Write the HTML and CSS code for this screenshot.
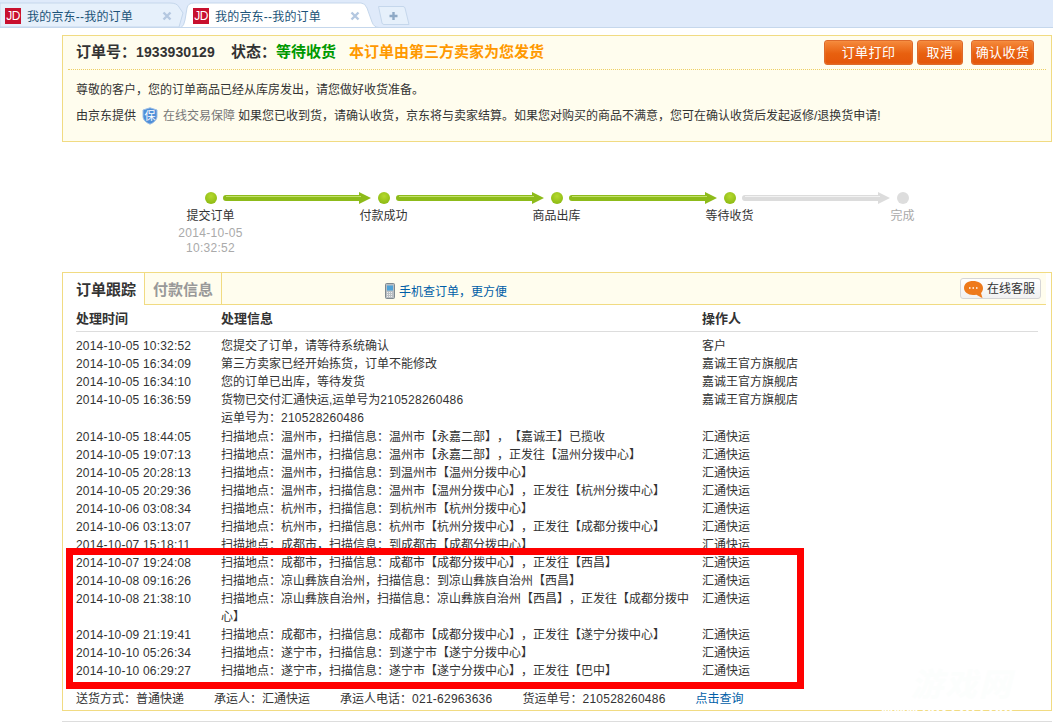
FILE: index.html
```html
<!DOCTYPE html>
<html lang="zh-CN">
<head>
<meta charset="utf-8">
<title>我的京东--我的订单</title>
<link rel="stylesheet" href="styles.css">
</head>
<body>
<div class="tabstrip">
  <div class="tab tab-first">
    <svg class="tab-shape" width="186" height="28" viewBox="0 0 186 28"><path d="M0 3H170Q177 3 179 7L183 13L179 27H0Z" fill="#e6f0fb" stroke="#c5d7ec"/></svg>
    <span class="jd">JD</span><span class="tab-title">我的京东--我的订单</span>
    <svg class="tab-close" width="10" height="10" viewBox="0 0 10 10"><path d="M1.5 1.5L8.5 8.5M8.5 1.5L1.5 8.5" stroke="#b4c8e0" stroke-width="2.4"/></svg>
  </div>
  <div class="tab tab-active">
    <svg class="tab-shape" width="198" height="28" viewBox="0 0 198 28"><path d="M0 27.5Q3 26 4 20L6 8Q7 3 13 3H180Q184 3 186 8L191 22Q193 27.5 198 27.5Z" fill="#fff" stroke="#c5d7ec"/></svg>
    <span class="jd">JD</span><span class="tab-title">我的京东--我的订单</span>
    <svg class="tab-close" width="10" height="10" viewBox="0 0 10 10"><path d="M1.5 1.5L8.5 8.5M8.5 1.5L1.5 8.5" stroke="#b4c8e0" stroke-width="2.4"/></svg>
  </div>
  <svg class="tab-new" width="34" height="22" viewBox="0 0 34 22"><path d="M1.5 1.5H26Q27.5 1.5 28 3L32 19.5H7Q5.5 19.5 5 18Z" fill="#e6f0fb" stroke="#c5d7ec"/><path d="M16.5 7V15M12.5 11H20.5" stroke="#8ea9c6" stroke-width="2.4"/></svg>
</div>

<main class="page">
  <section class="summary">
    <div class="summary-head">
      <h1 class="order-title">订单号：<span class="order-no">1933930129</span><span class="state-label">状态：</span><span class="state">等待收货</span><span class="seller">本订单由第三方卖家为您发货</span></h1>
      <div class="actions">
        <a class="btn btn-print">订单打印</a>
        <a class="btn btn-cancel">取消</a>
        <a class="btn btn-confirm">确认收货</a>
      </div>
    </div>
    <div class="summary-body">
      <p>尊敬的客户，您的订单商品已经从库房发出，请您做好收货准备。</p>
      <p class="guarantee">由京东提供
        <svg class="shield" width="16" height="18" viewBox="0 0 16 18"><path d="M8 .8L15 3V9.5C15 13 11.5 15.8 8 17.2 4.500 15.800 1 13 1 9.5V3Z" fill="#4f8fd8" stroke="#9dbfe6"/><text x="8" y="13" text-anchor="middle" class="shield-text">保</text></svg>
        <span class="muted">在线交易保障</span> 如果您已收到货，请确认收货，京东将与卖家结算。如果您对购买的商品不满意，您可在确认收货后发起返修/退换货申请!</p>
    </div>
  </section>

  <section class="progress">
    <div class="track">
      <span class="dot"></span>
      <svg class="arrow" width="148" height="12" viewBox="0 0 148 12"><path d="M3 3H136V0L148 6 136 12V9H3Q0 9 0 6T3 3Z" fill="#8dbb1a"/><path d="M3 4.500H138" stroke="#c2e06a" stroke-width="1"/></svg>
      <span class="dot"></span>
      <svg class="arrow" width="148" height="12" viewBox="0 0 148 12"><path d="M3 3H136V0L148 6 136 12V9H3Q0 9 0 6T3 3Z" fill="#8dbb1a"/><path d="M3 4.500H138" stroke="#c2e06a" stroke-width="1"/></svg>
      <span class="dot"></span>
      <svg class="arrow" width="148" height="12" viewBox="0 0 148 12"><path d="M3 3H136V0L148 6 136 12V9H3Q0 9 0 6T3 3Z" fill="#8dbb1a"/><path d="M3 4.500H138" stroke="#c2e06a" stroke-width="1"/></svg>
      <span class="dot"></span>
      <svg class="arrow" width="148" height="12" viewBox="0 0 148 12"><path d="M3 3H136V0L148 6 136 12V9H3Q0 9 0 6T3 3Z" fill="#dcdcdc"/><path d="M3 4.500H138" stroke="#f2f2f2" stroke-width="1"/></svg>
      <span class="dot dot-off"></span>
    </div>
    <div class="steps">
      <div class="step">提交订单<div class="step-date">2014-10-05<br>10:32:52</div></div>
      <div class="step">付款成功</div>
      <div class="step">商品出库</div>
      <div class="step">等待收货</div>
      <div class="step step-off">完成</div>
    </div>
  </section>

  <section class="tracking">
    <div class="tracking-bar">
      <div class="t-tab t-tab-on">订单跟踪</div>
      <div class="t-tab t-tab-off">付款信息</div>
      <a class="mobile-link">
        <svg class="phone" width="10" height="16" viewBox="0 0 10 16"><rect x=".5" y=".5" width="9" height="15" rx="1" fill="#b9bfc4" stroke="#7f8a90"/><rect x="2" y="2.500" width="6" height="5" fill="#4fa3d8"/><path d="M2 9.500H8M2 11.500H8M2 13.500H8" stroke="#eee" stroke-dasharray="1 1"/></svg>
        手机查订单，更方便</a>
      <a class="service">
        <svg class="bubble" width="21" height="19" viewBox="0 0 21 19"><path d="M10 1C15 1 20 3.500 20 8C20 10.500 19 12 18 13L19.500 18C17 17 15 15.500 13.500 14.800C12 15 11 15 10 15C5 15 1 12 1 8C1 3.500 5 1 10 1Z" fill="#ee7a1c"/><path d="M6 8H7.500M9.500 8H11M13 8H14.500" stroke="#fff" stroke-width="1.600"/></svg>
        在线客服</a>
    </div>
    <div class="log">
      <div class="row row-head"><div>处理时间</div><div>处理信息</div><div>操作人</div></div>
      <div class="rows">
        <div class="row"><div>2014-10-05 10:32:52</div><div>您提交了订单，请等待系统确认</div><div>客户</div></div>
        <div class="row"><div>2014-10-05 16:34:09</div><div>第三方卖家已经开始拣货，订单不能修改</div><div>嘉诚王官方旗舰店</div></div>
        <div class="row"><div>2014-10-05 16:34:10</div><div>您的订单已出库，等待发货</div><div>嘉诚王官方旗舰店</div></div>
        <div class="row row-tall"><div>2014-10-05 16:36:59</div><div>货物已交付汇通快运,运单号为<span class="num">210528260486</span><br>运单号为：<span class="num">210528260486</span></div><div>嘉诚王官方旗舰店</div></div>
        <div class="row"><div>2014-10-05 18:44:05</div><div>扫描地点：温州市，扫描信息：温州市【永嘉二部】，【嘉诚王】已揽收</div><div>汇通快运</div></div>
        <div class="row"><div>2014-10-05 19:07:13</div><div>扫描地点：温州市，扫描信息：温州市【永嘉二部】，正发往【温州分拨中心】</div><div>汇通快运</div></div>
        <div class="row"><div>2014-10-05 20:28:13</div><div>扫描地点：温州市，扫描信息：到温州市【温州分拨中心】</div><div>汇通快运</div></div>
        <div class="row"><div>2014-10-05 20:29:36</div><div>扫描地点：温州市，扫描信息：温州市【温州分拨中心】，正发往【杭州分拨中心】</div><div>汇通快运</div></div>
        <div class="row"><div>2014-10-06 03:08:34</div><div>扫描地点：杭州市，扫描信息：到杭州市【杭州分拨中心】</div><div>汇通快运</div></div>
        <div class="row"><div>2014-10-06 03:13:07</div><div>扫描地点：杭州市，扫描信息：杭州市【杭州分拨中心】，正发往【成都分拨中心】</div><div>汇通快运</div></div>
        <div class="row"><div>2014-10-07 15:18:11</div><div>扫描地点：成都市，扫描信息：到成都市【成都分拨中心】</div><div>汇通快运</div></div>
        <div class="row"><div>2014-10-07 19:24:08</div><div>扫描地点：成都市，扫描信息：成都市【成都分拨中心】，正发往【西昌】</div><div>汇通快运</div></div>
        <div class="row"><div>2014-10-08 09:16:26</div><div>扫描地点：凉山彝族自治州，扫描信息：到凉山彝族自治州【西昌】</div><div>汇通快运</div></div>
        <div class="row"><div>2014-10-08 21:38:10</div><div>扫描地点：凉山彝族自治州，扫描信息：凉山彝族自治州【西昌】，正发往【成都分拨中心】</div><div>汇通快运</div></div>
        <div class="row"><div>2014-10-09 21:19:41</div><div>扫描地点：成都市，扫描信息：成都市【成都分拨中心】，正发往【遂宁分拨中心】</div><div>汇通快运</div></div>
        <div class="row"><div>2014-10-10 05:26:34</div><div>扫描地点：遂宁市，扫描信息：到遂宁市【遂宁分拨中心】</div><div>汇通快运</div></div>
        <div class="row"><div>2014-10-10 06:29:27</div><div>扫描地点：遂宁市，扫描信息：遂宁市【遂宁分拨中心】，正发往【巴中】</div><div>汇通快运</div></div>
      </div>
      <div class="shipping">
        <span>送货方式：普通快递</span>
        <span>承运人：汇通快运</span>
        <span>承运人电话：<span class="num">021-62963636</span></span>
        <span>货运单号：<span class="num">210528260486</span></span>
        <a class="query">点击查询</a>
      </div>
    </div>
  </section>
  <div class="page-end"></div>
</main>

<div class="highlight"></div>
<div class="watermark">游戏网<span class="watermark-url">www.0827zg.com</span></div>
</body>
</html>
```
FILE: styles.css
```css
html, body { margin: 0; padding: 0; height: 724px; overflow: hidden; background: #fff; }
body { font: 12px/18px "Liberation Sans", "Noto Sans CJK SC", sans-serif; color: #333; position: relative; text-spacing-trim: space-all; }
p, h1 { margin: 0; }
.num { letter-spacing: .25px; }

.tabstrip { height: 27px; background: #dfeafa; border-bottom: 1px solid #c5d7ec; display: flex; position: relative; box-sizing: content-box; }
.tab { position: relative; height: 27px; display: flex; align-items: center; flex: none; }
.tab-first { width: 181px; padding-left: 5px; box-sizing: border-box; }
.tab-active { width: 195px; padding-left: 12px; box-sizing: border-box; z-index: 1; }
.tab-shape { position: absolute; left: 0; top: 0; }
.jd { position: relative; width: 16px; height: 16px; margin-top: 4px; background: #c8102e; color: #fff; font: 12px/16px "Liberation Sans", sans-serif; letter-spacing: -.5px; text-align: center; }
.tab-title { position: relative; margin: 6px 0 0 6px; width: 135px; color: #1b5378; white-space: nowrap; letter-spacing: .2px; }
.tab-close { position: relative; margin-top: 4px; }
.tab-new { flex: none; margin: 5px 0 0 1px; }

.page { margin-left: 62px; width: 990px; }

.summary { margin-top: 7px; background: #fffdee; border: 1px solid #f1db82; padding: 0 5px 13px; height: 107px; box-sizing: border-box; }
.summary-head { display: flex; justify-content: space-between; align-items: center; padding: 4px 12px 4px 8px; border-bottom: 1px dotted #edcf63; height: 25px; box-sizing: content-box; }
.order-title { font-size: 15px; font-weight: bold; white-space: nowrap; color: #333; line-height: 25px; padding-bottom: 1px; margin-top: -1px; }
.order-no { font-size: 14px; font-family: "Liberation Sans", sans-serif; color: #333; letter-spacing: .1px; }
.state-label { margin-left: 16px; }
.state { color: #090; }
.seller { margin-left: 13px; color: #f90; }
.actions { display: flex; }
.btn { height: 25px; box-sizing: border-box; border: 1px solid #dd6a2a; border-radius: 3px; background: linear-gradient(#f58a3c, #e8600f 55%, #e4560a); color: #fff; font-size: 13px; line-height: 24px; text-align: center; letter-spacing: .4px; box-shadow: inset 0 0 1px #ffb37a; }
.btn-print { width: 89px; }
.btn-cancel { width: 46px; margin-left: 4px; }
.btn-confirm { width: 63px; margin-left: 8px; }
.summary-body { padding: 7px 0 0 8px; }
.summary-body p { line-height: 26px; white-space: nowrap; }
.guarantee { display: flex; align-items: center; }
.shield { margin: 0 5px 0 6px; flex: none; }
.shield-text { font-size: 11px; fill: #fff; }
.muted { color: #777; margin-right: 3px; }

.progress { margin-top: 50px; height: 80px; }
.track { display: flex; align-items: center; padding-left: 81px; height: 12px; margin-left: 62px; }
.dot { width: 12px; height: 12px; border-radius: 50%; background: radial-gradient(circle at 50% 35%, #b5d92f, #82b20c); flex: none; }
.dot-off { background: #ddd; }
.arrow { flex: none; margin: 0 7px 0 6px; }
.steps { display: flex; margin-left: 62px; margin-top: 4px; }
.step { width: 173px; text-align: center; line-height: 16px; color: #333; flex: none; }
.step-date { color: #aaa; font-size: 12px; line-height: 15px; margin-top: 2px; letter-spacing: .3px; }
.step-off { color: #aaa; }

.tracking { border: 1px solid #f1db82; height: 439px; box-sizing: border-box; }
.tracking-bar { display: flex; align-items: center; height: 31px; background: #fffdee; border-bottom: 1px solid #f1db82; margin-right: 5px; }
.t-tab { font-size: 15px; font-weight: bold; height: 31px; line-height: 33px; text-align: center; box-sizing: border-box; flex: none; }
.t-tab-on { width: 82px; padding-left: 13px; text-align: left; background: #fff; color: #333; height: 32px; margin-bottom: -1px; border-right: 1px solid #f1db82; position: relative; white-space: nowrap; }
.t-tab-off { width: 77px; color: #999; border-right: 1px solid #f1db82; }
.mobile-link { margin: 6px 0 0 163px; display: flex; align-items: center; color: #005ea7; white-space: nowrap; }
.phone { margin-right: 4px; margin-top: -2px; }
.service { margin-left: auto; margin-right: 5px; width: 81px; height: 21px; box-sizing: border-box; border: 1px solid #d6d6d6; border-radius: 3px; background: linear-gradient(#fff, #f1f1f1); display: flex; align-items: center; padding: 1px 0 0 2px; color: #333; white-space: nowrap; }
.bubble { margin-right: 3px; }

.log { padding: 0 13px; }
.row { display: grid; grid-template-columns: 145px 481px 1fr; line-height: 18px; }
.row > div:first-child { letter-spacing: .2px; }
.row > div:nth-child(2) { width: 470px; }
.row-head { font-size: 13px; font-weight: bold; height: 26px; line-height: 28px; border-bottom: 1px solid #ddd; box-sizing: content-box; width: 962px; }
.row-head > div:first-child { letter-spacing: 0; }
.rows { margin-top: 5px; }
.row-tall { padding-bottom: 1px; }
.shipping { display: flex; gap: 30px; margin-top: 10px; line-height: 18px; white-space: nowrap; }
.query { color: #005ea7; }

.page-end { margin-top: 10px; border-top: 1px solid #ddd; }

.highlight { position: absolute; left: 66px; top: 548px; width: 738px; height: 141px; box-sizing: border-box; border: 7px solid #f00; }
.watermark { position: absolute; left: 911px; top: 668px; font-size: 32px; line-height: 34px; font-weight: bold; font-style: italic; color: #fcfefd; letter-spacing: 2px; white-space: nowrap; }
.watermark-url { display: block; position: absolute; left: -30px; top: 33px; font-size: 16px; line-height: 18px; color: #fff; letter-spacing: 0; }
```
